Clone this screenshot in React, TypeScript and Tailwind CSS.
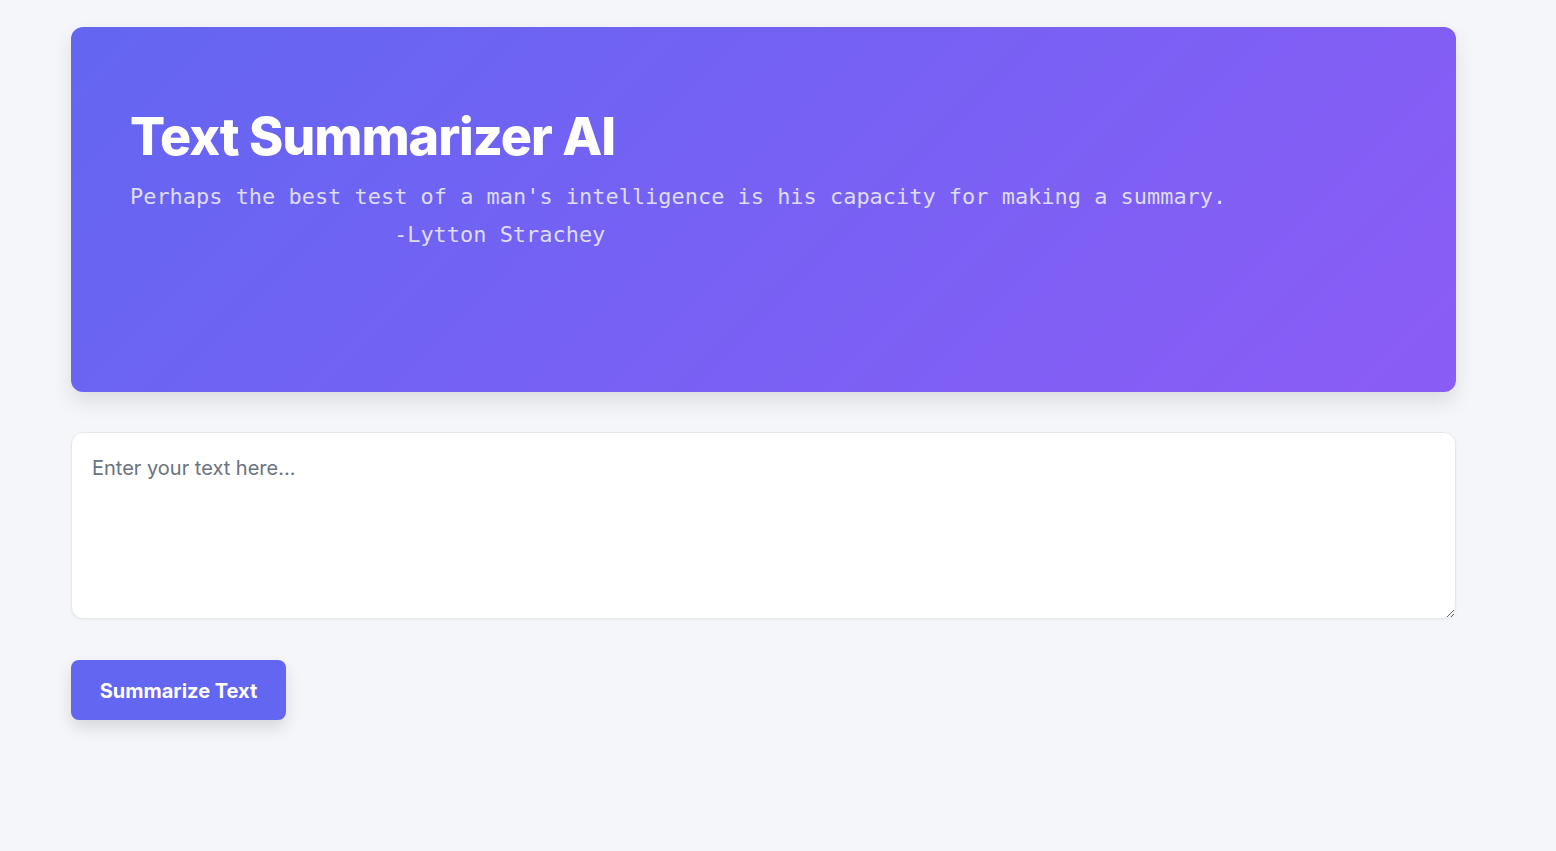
import React from "react";

export default function App() {
  return (
    <div className="min-h-[851px] bg-[#f5f6fa] pt-[27px] pl-[71px] pb-10" style={{ fontFamily: "Inter, 'Noto Sans', sans-serif" }}>
      <div className="w-[1385px]">
        <header className="h-[365px] rounded-[12px] bg-[linear-gradient(135deg,#6366f1,#8b5cf6)] pl-[60px] pt-[79px] shadow-[0_10px_20px_rgba(0,0,0,0.1)]">
          <h1 className="-ml-px text-[52px] font-extrabold leading-[1.2] tracking-[-0.02em] text-white">Text Summarizer AI</h1>
          <div className="-ml-px mt-[10px] text-[21.95px] leading-[38px] text-[#dedcf8]" style={{ fontFamily: "'DejaVu Sans Mono', monospace" }}>
            <p>Perhaps the best test of a man's intelligence is his capacity for making a summary.</p>
            <p className="pl-[264px]">-Lytton Strachey</p>
          </div>
        </header>
        <textarea
          placeholder="Enter your text here..."
          className="mt-[40px] block h-[187px] w-full rounded-[12px] border border-[#e5e7eb] bg-white px-[20px] py-[20px] text-[20px] leading-[1.5] text-gray-800 placeholder:text-[#6b7280] shadow-[0_1px_3px_rgba(0,0,0,0.05)] outline-none"
        />
        <button className="mt-[41px] h-[60px] w-[215px] rounded-[8px] bg-[#6366f1] pt-[1px] text-[20px] font-bold text-white shadow-[0_8px_16px_rgba(0,0,0,0.12)]">
          Summarize Text
        </button>
      </div>
    </div>
  );
}
